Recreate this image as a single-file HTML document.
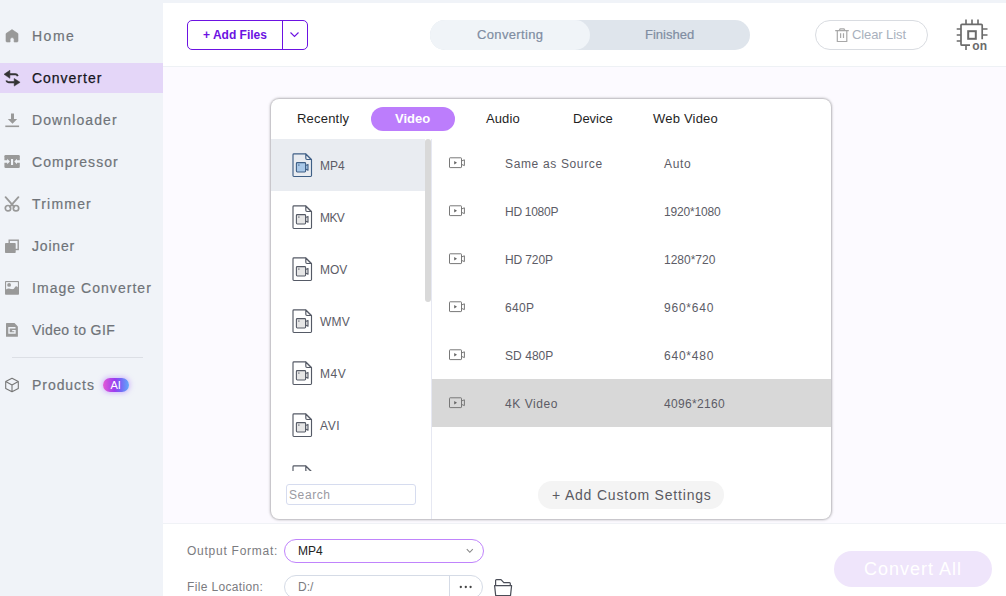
<!DOCTYPE html>
<html><head><meta charset="utf-8">
<style>
*{box-sizing:border-box;margin:0;padding:0}
html,body{width:1006px;height:596px;overflow:hidden;background:#f0f3f8;font-family:"Liberation Sans",sans-serif;position:relative}
.a{position:absolute}
.t{position:absolute;white-space:nowrap;line-height:1}
#side{left:0;top:0;width:163px;height:596px;background:#f0f3f8}
.nav{color:#6f7379;font-size:14px;-webkit-text-stroke:0.2px #6f7379}
.ico{position:absolute;left:4px;width:16px;height:16px}
#top{left:163px;top:3px;width:843px;height:64px;background:#fff;border-bottom:1px solid #eef1f5}
#main{left:163px;top:67px;width:843px;height:456px;background:#fcfaff}
#bot{left:163px;top:523px;width:843px;height:73px;background:#fff;border-top:1px solid #f0f2f6}
#panel{left:271px;top:99px;width:560px;height:420px;background:#fff;border-radius:8px;box-shadow:0 0 2px 1px rgba(0,0,0,0.22),0 0 4px rgba(0,0,0,0.12);overflow:hidden}
.tab{font-size:13px;color:#1f1f1f}
.fmt{font-size:12px;color:#5c5c66}
.rl{font-size:12px;color:#5c5c66}
</style></head><body>
<!-- sidebar -->
<div id="side" class="a"></div>
<div class="a" style="left:0;top:63px;width:163px;height:30px;background:#e4d6f8"></div>

<!-- home -->
<svg class="a" style="left:5px;top:29px" width="14" height="14" viewBox="0 0 14 14"><path d="M7 0.6 L13 4.6 V12 a1 1 0 0 1 -1 1 H9.1 V10.6 a2 2 0 0 0 -4 0 V13 H2 a1 1 0 0 1 -1 -1 V4.6 Z" fill="#999" stroke="#999" stroke-width="0.6" stroke-linejoin="round"/></svg>
<div class="t nav" style="left:32px;top:29px;letter-spacing:1.5px">Home</div>

<!-- converter -->
<svg class="a" style="left:0;top:66px" width="24" height="24" viewBox="0 0 24 24"><path d="M4 8.3 L9.9 4.3 V12.3 Z" fill="#333" stroke="#333" stroke-width="0.5" stroke-linejoin="round"/><path d="M9.5 8.3 H15.3 Q17 8.3 17.8 10.2" stroke="#333" stroke-width="1.9" fill="none"/><path d="M20.1 16.3 L14.2 12.5 V20.1 Z" fill="#333" stroke="#333" stroke-width="0.5" stroke-linejoin="round"/><path d="M14.6 16.3 H8.7 Q7 16.3 6.3 14.5" stroke="#333" stroke-width="1.9" fill="none"/></svg>
<div class="t nav" style="left:32px;top:71px;color:#16161e;letter-spacing:0.98px;-webkit-text-stroke:0.25px #16161e">Converter</div>

<!-- downloader -->
<svg class="a" style="left:5px;top:113px" width="15" height="15" viewBox="0 0 15 15"><path d="M6 0.5 H9 V6 H12.2 L7.5 10.7 L2.8 6 H6 Z" fill="#999"/><rect x="0.3" y="12.5" width="13.8" height="1.6" fill="#999"/></svg>
<div class="t nav" style="left:32px;top:113px;letter-spacing:1.1px">Downloader</div>

<!-- compressor -->
<svg class="a" style="left:4px;top:155px" width="17" height="14" viewBox="0 0 17 14"><rect x="0.4" y="0" width="15.4" height="13" rx="1.2" fill="#999"/><path d="M-1 5.2 H3.2 V3.7 L5.9 6.5 L3.2 9.3 V7.8 H-1 Z M17 5.2 H13 V3.7 L10.3 6.5 L13 9.3 V7.8 H17 Z" fill="#f0f3f8"/><rect x="7" y="4" width="2.1" height="6" fill="#f0f3f8"/></svg>
<div class="t nav" style="left:32px;top:155px;letter-spacing:1.05px">Compressor</div>

<!-- trimmer -->
<svg class="a" style="left:4px;top:196px" width="16" height="16" viewBox="0 0 16 16"><path d="M1.6 1.2 L10.2 10.8 M14.4 1.2 L5.8 10.8" stroke="#999" stroke-width="1.8" fill="none" stroke-linecap="round"/><circle cx="4" cy="12.2" r="2.7" stroke="#999" stroke-width="1.7" fill="none"/><circle cx="12" cy="12.2" r="2.7" stroke="#999" stroke-width="1.7" fill="none"/></svg>
<div class="t nav" style="left:32px;top:197px;letter-spacing:1.2px">Trimmer</div>

<!-- joiner -->
<svg class="a" style="left:4px;top:239px" width="16" height="16" viewBox="0 0 16 16"><rect x="5.2" y="1.2" width="9" height="9.3" stroke="#999" stroke-width="1.4" fill="none"/><rect x="1" y="3.9" width="10.7" height="10.1" rx="0.8" fill="#999"/></svg>
<div class="t nav" style="left:32px;top:239px;letter-spacing:0.8px">Joiner</div>

<!-- image converter -->
<svg class="a" style="left:4px;top:280px" width="16" height="16" viewBox="0 0 16 16"><rect x="1" y="1" width="14" height="13.75" rx="0.8" fill="#999"/><rect x="2.1" y="2.1" width="11.8" height="7.5" fill="#f0f3f8"/><circle cx="5.1" cy="4.9" r="1.9" fill="#999"/><path d="M2.1 9.6 Q3.5 8.2 5 8.4 Q7 8.8 8.6 9.3 Q10 9.3 11.2 6.7 Q12.2 5.6 13.9 7.2 V14 H2.1 Z" fill="#999"/></svg>
<div class="t nav" style="left:32px;top:281px;letter-spacing:1.04px">Image Converter</div>

<!-- video to gif -->
<svg class="a" style="left:5px;top:322px" width="14" height="16" viewBox="0 0 14 16"><path d="M1 1.6 a0.6 0.6 0 0 1 0.6 -0.6 H9.5 L12.9 4.5 V14.2 a0.6 0.6 0 0 1 -0.6 0.6 H1.6 a0.6 0.6 0 0 1 -0.6 -0.6 Z" fill="#999"/><path d="M10.5 5.7 H4 V11 H10 V8.6 H7.2" stroke="#f0f3f8" stroke-width="1.4" fill="none"/></svg>
<div class="t nav" style="left:32px;top:323px;letter-spacing:0.4px">Video to GIF</div>

<div class="a" style="left:12px;top:357px;width:131px;height:1px;background:#dcdfe5"></div>

<!-- products -->
<svg class="a" style="left:4px;top:377px" width="16" height="16" viewBox="0 0 16 16"><path d="M8 1.2 L14.3 4.6 V11.4 L8 14.8 L1.7 11.4 V4.6 Z M1.7 4.6 L8 8 L14.3 4.6 M8 8 V14.8" stroke="#777" stroke-width="1.1" fill="none" stroke-linejoin="round"/></svg>
<div class="t nav" style="left:32px;top:378px;letter-spacing:0.95px">Products</div>
<div class="a" style="left:103px;top:378px;width:26px;height:14px;border-radius:7px;background:linear-gradient(90deg,#e35ad6 0%,#9b3cf0 45%,#7a5ff5 65%,#62aaf9 100%);box-shadow:0 0 5px 1px rgba(180,130,255,0.55)"></div>
<div class="t" style="left:110.5px;top:380px;font-size:11px;color:#fff;letter-spacing:0px">AI</div>

<!-- top bar -->
<div id="top" class="a"></div>
<div class="a" style="left:187px;top:20px;width:121px;height:30px;border:1px solid #6c12e2;border-radius:5px"></div>
<div class="a" style="left:282px;top:20px;width:1px;height:30px;background:#6c12e2"></div>
<div class="t" style="left:203px;top:29px;font-size:12px;font-weight:700;color:#6c12e2;letter-spacing:0px">+ Add Files</div>
<svg class="a" style="left:289px;top:31px" width="11" height="7" viewBox="0 0 11 7"><path d="M1.5 1.5 L5.5 5.5 L9.5 1.5" stroke="#6c12e2" stroke-width="1.1" fill="none"/></svg>

<div class="a" style="left:430px;top:20px;width:320px;height:30px;border-radius:15px;background:#dfe5ec"></div>
<div class="a" style="left:430px;top:20px;width:160px;height:30px;border-radius:15px;background:#f0f4f8"></div>
<div class="t" style="left:477px;top:28px;font-size:13px;color:#7f8da2;letter-spacing:0.35px;-webkit-text-stroke:0.2px #7f8da2">Converting</div>
<div class="t" style="left:645px;top:28px;font-size:13px;color:#7f8da2;letter-spacing:0px;-webkit-text-stroke:0.2px #7f8da2">Finished</div>

<div class="a" style="left:815px;top:20px;width:113px;height:30px;border:1px solid #d9dce1;border-radius:15px"></div>
<svg class="a" style="left:834px;top:27px" width="16" height="16" viewBox="0 0 16 16"><path d="M1.2 3.6 H14.8 M5.2 3.6 L6.1 1.9 H10 L10.9 3.6 M3.3 3.6 V14.5 H12.8 V3.6 M6.6 6.3 V11.1 M9.5 6.3 V11.1" stroke="#a8a8a8" stroke-width="1.2" fill="none" stroke-linejoin="round"/></svg>
<div class="t" style="left:852px;top:28px;font-size:13px;color:#a9b1bd;letter-spacing:-0.1px">Clear List</div>

<svg class="a" style="left:955px;top:18px" width="34" height="34" viewBox="0 0 34 34"><path d="M7 6.3 H26.2 a1 1 0 0 1 1 1 V21.3 M7 27.2 H15 M7 6.3 a1 1 0 0 0 -1 1 V26.2 a1 1 0 0 0 1 1" stroke="#6b6b6b" stroke-width="1.7" fill="none"/><rect x="13.2" y="13.2" width="7.6" height="7.6" stroke="#6b6b6b" stroke-width="2" fill="none"/><path d="M11 1.5 V6 M17 1.5 V6 M23 1.5 V6 M1.7 11 H6 M1.7 17 H6 M1.7 23 H6 M27 11 H32.5 M27 17 H32.5 M11 27 V32" stroke="#6b6b6b" stroke-width="1.6" fill="none"/><text x="17.3" y="31.6" font-family="Liberation Sans" font-weight="700" font-size="12" fill="#6b6b6b">on</text></svg>

<!-- main -->
<div id="main" class="a"></div>
<div id="bot" class="a"></div>

<!-- panel -->
<div id="panel" class="a">
  <div class="t tab" style="left:26px;top:13px;letter-spacing:0.2px">Recently</div>
  <div class="a" style="left:100px;top:8px;width:84px;height:24px;border-radius:12px;background:#bc7dfc"></div>
  <div class="t tab" style="left:124px;top:13px;color:#fff;font-weight:700">Video</div>
  <div class="t tab" style="left:215px;top:13px;letter-spacing:0.1px">Audio</div>
  <div class="t tab" style="left:302px;top:13px">Device</div>
  <div class="t tab" style="left:382px;top:13px;letter-spacing:0.2px">Web Video</div>
  <div class="a" style="left:0;top:40px;width:160px;height:332px;overflow:hidden">
    <div class="a" style="left:0;top:0;width:154px;height:52px;background:#e9ecf1"></div>
    <svg class="a" style="left:21px;top:14px" width="21" height="25" viewBox="0 0 21 25"><path d="M1.0 1.8 a0.9 0.9 0 0 1 0.9 -0.9 H13.8 L19.5 6.6 V22.6 a0.9 0.9 0 0 1 -0.9 0.9 H1.9 a0.9 0.9 0 0 1 -0.9 -0.9 Z" stroke="#3f5f86" stroke-width="1.15" fill="none" stroke-linejoin="round"/><path d="M13.8 1.2 V5.3 a1.2 1.2 0 0 0 1.2 1.2 H19.2 Z" stroke="#3f5f86" stroke-width="1.15" fill="#e9ecf1" stroke-linejoin="round"/><rect x="4.4" y="9.6" width="9.2" height="9.4" rx="0.9" stroke="#3f5f86" stroke-width="1.1" fill="#a9c8e8"/><path d="M13.6 12.6 L16 11.4 V17.2 L13.6 16 Z" stroke="#3f5f86" stroke-width="1.1" fill="#a9c8e8" stroke-linejoin="round"/><rect x="6" y="11.6" width="1.6" height="0.9" fill="#3f5f86"/></svg>
    <div class="t fmt" style="left:49px;top:21px;letter-spacing:0.0px">MP4</div>
    <svg class="a" style="left:21px;top:66px" width="21" height="25" viewBox="0 0 21 25"><path d="M1.0 1.8 a0.9 0.9 0 0 1 0.9 -0.9 H13.8 L19.5 6.6 V22.6 a0.9 0.9 0 0 1 -0.9 0.9 H1.9 a0.9 0.9 0 0 1 -0.9 -0.9 Z" stroke="#555a66" stroke-width="1.15" fill="none" stroke-linejoin="round"/><path d="M13.8 1.2 V5.3 a1.2 1.2 0 0 0 1.2 1.2 H19.2 Z" stroke="#555a66" stroke-width="1.15" fill="#f4f4f4" stroke-linejoin="round"/><rect x="4.4" y="9.6" width="9.2" height="9.4" rx="0.9" stroke="#555a66" stroke-width="1.1" fill="#e6e6e6"/><path d="M13.6 12.6 L16 11.4 V17.2 L13.6 16 Z" stroke="#555a66" stroke-width="1.1" fill="#e6e6e6" stroke-linejoin="round"/><rect x="6" y="11.6" width="1.6" height="0.9" fill="#555a66"/></svg>
    <div class="t fmt" style="left:49px;top:73px;letter-spacing:-0.6px">MKV</div>
    <svg class="a" style="left:21px;top:118px" width="21" height="25" viewBox="0 0 21 25"><path d="M1.0 1.8 a0.9 0.9 0 0 1 0.9 -0.9 H13.8 L19.5 6.6 V22.6 a0.9 0.9 0 0 1 -0.9 0.9 H1.9 a0.9 0.9 0 0 1 -0.9 -0.9 Z" stroke="#555a66" stroke-width="1.15" fill="none" stroke-linejoin="round"/><path d="M13.8 1.2 V5.3 a1.2 1.2 0 0 0 1.2 1.2 H19.2 Z" stroke="#555a66" stroke-width="1.15" fill="#f4f4f4" stroke-linejoin="round"/><rect x="4.4" y="9.6" width="9.2" height="9.4" rx="0.9" stroke="#555a66" stroke-width="1.1" fill="#e6e6e6"/><path d="M13.6 12.6 L16 11.4 V17.2 L13.6 16 Z" stroke="#555a66" stroke-width="1.1" fill="#e6e6e6" stroke-linejoin="round"/><rect x="6" y="11.6" width="1.6" height="0.9" fill="#555a66"/></svg>
    <div class="t fmt" style="left:49px;top:125px;letter-spacing:0.0px">MOV</div>
    <svg class="a" style="left:21px;top:170px" width="21" height="25" viewBox="0 0 21 25"><path d="M1.0 1.8 a0.9 0.9 0 0 1 0.9 -0.9 H13.8 L19.5 6.6 V22.6 a0.9 0.9 0 0 1 -0.9 0.9 H1.9 a0.9 0.9 0 0 1 -0.9 -0.9 Z" stroke="#555a66" stroke-width="1.15" fill="none" stroke-linejoin="round"/><path d="M13.8 1.2 V5.3 a1.2 1.2 0 0 0 1.2 1.2 H19.2 Z" stroke="#555a66" stroke-width="1.15" fill="#f4f4f4" stroke-linejoin="round"/><rect x="4.4" y="9.6" width="9.2" height="9.4" rx="0.9" stroke="#555a66" stroke-width="1.1" fill="#e6e6e6"/><path d="M13.6 12.6 L16 11.4 V17.2 L13.6 16 Z" stroke="#555a66" stroke-width="1.1" fill="#e6e6e6" stroke-linejoin="round"/><rect x="6" y="11.6" width="1.6" height="0.9" fill="#555a66"/></svg>
    <div class="t fmt" style="left:49px;top:177px;letter-spacing:0.2px">WMV</div>
    <svg class="a" style="left:21px;top:222px" width="21" height="25" viewBox="0 0 21 25"><path d="M1.0 1.8 a0.9 0.9 0 0 1 0.9 -0.9 H13.8 L19.5 6.6 V22.6 a0.9 0.9 0 0 1 -0.9 0.9 H1.9 a0.9 0.9 0 0 1 -0.9 -0.9 Z" stroke="#555a66" stroke-width="1.15" fill="none" stroke-linejoin="round"/><path d="M13.8 1.2 V5.3 a1.2 1.2 0 0 0 1.2 1.2 H19.2 Z" stroke="#555a66" stroke-width="1.15" fill="#f4f4f4" stroke-linejoin="round"/><rect x="4.4" y="9.6" width="9.2" height="9.4" rx="0.9" stroke="#555a66" stroke-width="1.1" fill="#e6e6e6"/><path d="M13.6 12.6 L16 11.4 V17.2 L13.6 16 Z" stroke="#555a66" stroke-width="1.1" fill="#e6e6e6" stroke-linejoin="round"/><rect x="6" y="11.6" width="1.6" height="0.9" fill="#555a66"/></svg>
    <div class="t fmt" style="left:49px;top:229px;letter-spacing:0.6px">M4V</div>
    <svg class="a" style="left:21px;top:274px" width="21" height="25" viewBox="0 0 21 25"><path d="M1.0 1.8 a0.9 0.9 0 0 1 0.9 -0.9 H13.8 L19.5 6.6 V22.6 a0.9 0.9 0 0 1 -0.9 0.9 H1.9 a0.9 0.9 0 0 1 -0.9 -0.9 Z" stroke="#555a66" stroke-width="1.15" fill="none" stroke-linejoin="round"/><path d="M13.8 1.2 V5.3 a1.2 1.2 0 0 0 1.2 1.2 H19.2 Z" stroke="#555a66" stroke-width="1.15" fill="#f4f4f4" stroke-linejoin="round"/><rect x="4.4" y="9.6" width="9.2" height="9.4" rx="0.9" stroke="#555a66" stroke-width="1.1" fill="#e6e6e6"/><path d="M13.6 12.6 L16 11.4 V17.2 L13.6 16 Z" stroke="#555a66" stroke-width="1.1" fill="#e6e6e6" stroke-linejoin="round"/><rect x="6" y="11.6" width="1.6" height="0.9" fill="#555a66"/></svg>
    <div class="t fmt" style="left:49px;top:281px;letter-spacing:0.6px">AVI</div>
    <svg class="a" style="left:21px;top:326px" width="21" height="25" viewBox="0 0 21 25"><path d="M1.0 1.8 a0.9 0.9 0 0 1 0.9 -0.9 H13.8 L19.5 6.6 V22.6 a0.9 0.9 0 0 1 -0.9 0.9 H1.9 a0.9 0.9 0 0 1 -0.9 -0.9 Z" stroke="#555a66" stroke-width="1.15" fill="none" stroke-linejoin="round"/><path d="M13.8 1.2 V5.3 a1.2 1.2 0 0 0 1.2 1.2 H19.2 Z" stroke="#555a66" stroke-width="1.15" fill="#f4f4f4" stroke-linejoin="round"/><rect x="4.4" y="9.6" width="9.2" height="9.4" rx="0.9" stroke="#555a66" stroke-width="1.1" fill="#e6e6e6"/><path d="M13.6 12.6 L16 11.4 V17.2 L13.6 16 Z" stroke="#555a66" stroke-width="1.1" fill="#e6e6e6" stroke-linejoin="round"/><rect x="6" y="11.6" width="1.6" height="0.9" fill="#555a66"/></svg>
  </div>
  <div class="a" style="left:154px;top:40px;width:6px;height:163px;border-radius:3px;background:#d9d9d9"></div>
  <div class="a" style="left:160px;top:40px;width:1px;height:380px;background:#e6e8f2"></div>
  <div class="a" style="left:15px;top:385px;width:130px;height:21px;border:1px solid #d6dcef;border-radius:3px"></div>
  <div class="t" style="left:18px;top:390px;font-size:12px;color:#9a9aa2;letter-spacing:0.6px">Search</div>
  <div class="a" style="left:161px;top:280px;width:399px;height:48px;background:#d8d8d8"></div>
  <svg class="a" style="left:177px;top:57px" width="18" height="14" viewBox="0 0 18 14"><rect x="1.5" y="1.8" width="12" height="9.8" rx="0.6" stroke="#787878" stroke-width="1" fill="none"/><path d="M6.2 5 L9 6.7 L6.2 8.4 Z" fill="#666"/><path d="M13.5 5 L16.4 3.8 V9.6 L13.5 8.4" stroke="#787878" stroke-width="1" fill="none" stroke-linejoin="round"/></svg>
  <div class="t rl" style="left:234px;top:59px;letter-spacing:0.65px">Same as Source</div>
  <div class="t rl" style="left:393px;top:59px;letter-spacing:0.67px">Auto</div>
  <svg class="a" style="left:177px;top:105px" width="18" height="14" viewBox="0 0 18 14"><rect x="1.5" y="1.8" width="12" height="9.8" rx="0.6" stroke="#787878" stroke-width="1" fill="none"/><path d="M6.2 5 L9 6.7 L6.2 8.4 Z" fill="#666"/><path d="M13.5 5 L16.4 3.8 V9.6 L13.5 8.4" stroke="#787878" stroke-width="1" fill="none" stroke-linejoin="round"/></svg>
  <div class="t rl" style="left:234px;top:107px;letter-spacing:-0.28px">HD 1080P</div>
  <div class="t rl" style="left:393px;top:107px;letter-spacing:-0.17px">1920*1080</div>
  <svg class="a" style="left:177px;top:153px" width="18" height="14" viewBox="0 0 18 14"><rect x="1.5" y="1.8" width="12" height="9.8" rx="0.6" stroke="#787878" stroke-width="1" fill="none"/><path d="M6.2 5 L9 6.7 L6.2 8.4 Z" fill="#666"/><path d="M13.5 5 L16.4 3.8 V9.6 L13.5 8.4" stroke="#787878" stroke-width="1" fill="none" stroke-linejoin="round"/></svg>
  <div class="t rl" style="left:234px;top:155px;letter-spacing:-0.12px">HD 720P</div>
  <div class="t rl" style="left:393px;top:155px;letter-spacing:0.0px">1280*720</div>
  <svg class="a" style="left:177px;top:201px" width="18" height="14" viewBox="0 0 18 14"><rect x="1.5" y="1.8" width="12" height="9.8" rx="0.6" stroke="#787878" stroke-width="1" fill="none"/><path d="M6.2 5 L9 6.7 L6.2 8.4 Z" fill="#666"/><path d="M13.5 5 L16.4 3.8 V9.6 L13.5 8.4" stroke="#787878" stroke-width="1" fill="none" stroke-linejoin="round"/></svg>
  <div class="t rl" style="left:234px;top:203px;letter-spacing:0.35px">640P</div>
  <div class="t rl" style="left:393px;top:203px;letter-spacing:0.78px">960*640</div>
  <svg class="a" style="left:177px;top:249px" width="18" height="14" viewBox="0 0 18 14"><rect x="1.5" y="1.8" width="12" height="9.8" rx="0.6" stroke="#787878" stroke-width="1" fill="none"/><path d="M6.2 5 L9 6.7 L6.2 8.4 Z" fill="#666"/><path d="M13.5 5 L16.4 3.8 V9.6 L13.5 8.4" stroke="#787878" stroke-width="1" fill="none" stroke-linejoin="round"/></svg>
  <div class="t rl" style="left:234px;top:251px;letter-spacing:0.05px">SD 480P</div>
  <div class="t rl" style="left:393px;top:251px;letter-spacing:0.78px">640*480</div>
  <svg class="a" style="left:177px;top:297px" width="18" height="14" viewBox="0 0 18 14"><rect x="1.5" y="1.8" width="12" height="9.8" rx="0.6" stroke="#787878" stroke-width="1" fill="none"/><path d="M6.2 5 L9 6.7 L6.2 8.4 Z" fill="#666"/><path d="M13.5 5 L16.4 3.8 V9.6 L13.5 8.4" stroke="#787878" stroke-width="1" fill="none" stroke-linejoin="round"/></svg>
  <div class="t rl" style="left:234px;top:299px;letter-spacing:0.55px">4K Video</div>
  <div class="t rl" style="left:393px;top:299px;letter-spacing:0.32px">4096*2160</div>
  <div class="a" style="left:267px;top:382px;width:186px;height:28px;border-radius:14px;background:#f4f4f4"></div>
  <div class="t" style="left:281px;top:389px;font-size:14px;color:#5a5a62;letter-spacing:0.8px">+ Add Custom Settings</div>
</div>

<!-- bottom -->
<div class="t" style="left:187px;top:545px;font-size:12px;color:#7b7b80;letter-spacing:0.75px">Output Format:</div>
<div class="a" style="left:284px;top:539px;width:200px;height:24px;border:1px solid #c084fc;border-radius:12px;background:#fff"></div>
<div class="t" style="left:298px;top:545px;font-size:12px;color:#222">MP4</div>
<svg class="a" style="left:466px;top:548px" width="9" height="6" viewBox="0 0 9 6"><path d="M0.8 1.2 L3.8 4.3 L6.8 1.2" stroke="#888" stroke-width="1.1" fill="none"/></svg>
<div class="t" style="left:187px;top:581px;font-size:12px;color:#7b7b80;letter-spacing:0.35px">File Location:</div>
<div class="a" style="left:284px;top:575px;width:199px;height:24px;border:1px solid #d5dbe6;border-radius:12px;background:#fff"></div>
<div class="a" style="left:449px;top:575px;width:1px;height:24px;background:#d5dbe6"></div>
<div class="t" style="left:298px;top:581px;font-size:12px;color:#7b7b80">D:/</div>
<svg class="a" style="left:459px;top:585px" width="14" height="4" viewBox="0 0 14 4"><circle cx="1.8" cy="2" r="1.15" fill="#444"/><circle cx="6.8" cy="2" r="1.15" fill="#444"/><circle cx="11.6" cy="2" r="1.15" fill="#444"/></svg>
<svg class="a" style="left:493px;top:578px" width="20" height="20" viewBox="0 0 20 20"><path d="M2.6 8 V2.5 a0.9 0.9 0 0 1 0.9 -0.9 H8 L10.8 4.6 H16.4 a0.9 0.9 0 0 1 0.9 0.9 V7.5" stroke="#4a4d57" stroke-width="1.2" fill="none" stroke-linejoin="round"/><path d="M1.6 7.6 H18.6 L17.5 17.6 H2.7 Z" stroke="#4a4d57" stroke-width="1.2" fill="#fff" stroke-linejoin="round"/></svg>
<div class="a" style="left:834px;top:551px;width:158px;height:36px;border-radius:18px;background:#efe5fb"></div>
<div class="t" style="left:864px;top:560px;font-size:18px;color:#fff;letter-spacing:1.0px">Convert All</div>
</body></html>
